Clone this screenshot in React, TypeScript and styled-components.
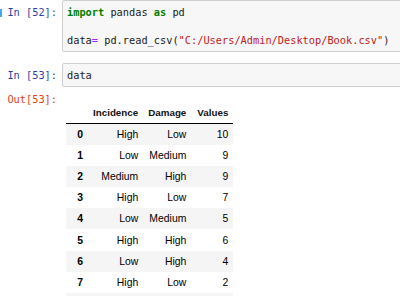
import React from "react";
import styled, { createGlobalStyle } from "styled-components";

const Global = createGlobalStyle`
  html, body { margin: 0; padding: 0; overflow: hidden; background: #fff; }
  body { width: 400px; height: 296px; }
`;

const Page = styled.div`
  position: relative;
  width: 400px;
  height: 296px;
  overflow: hidden;
  display: flex;
  flex-direction: column;
  gap: 11px;
`;

const SelectMark = styled.div`
  position: absolute;
  left: 0;
  top: 9px;
  width: 2px;
  height: 8px;
  background: #42a5f5;
`;

const CellRow = styled.div`
  display: flex;
  align-items: flex-start;
  gap: 5px;
`;

const Prompt = styled.div<{ $out?: boolean }>`
  flex: 0 0 57px;
  text-align: right;
  font-family: "DejaVu Sans Mono", monospace;
  font-size: 10.3px;
  line-height: 14px;
  color: ${(p) => (p.$out ? "#D84315" : "#303F9F")};
  padding-top: ${(p) => (p.$out ? "0" : "5px")};
  white-space: pre;
`;

const CodeBox = styled.div`
  flex: 0 0 440px;
  background: #f7f7f7;
  border: 1px solid #cfcfcf;
  border-radius: 2px;
  padding: 4px 4px;
  font-family: "DejaVu Sans Mono", monospace;
  font-size: 10.3px;
  line-height: 14px;
  color: #222;
  white-space: pre;
`;

const Kw = styled.span`
  color: #008000;
  font-weight: bold;
`;
const Op = styled.span`
  color: #aa22ff;
`;
const Str = styled.span`
  color: #ba2121;
`;

const OutRow = styled.div`
  display: flex;
  align-items: flex-start;
  gap: 5px;
  margin-top: -6px;
`;

const OutArea = styled.div`
  padding: 10px 0 0 4px;
`;

const Table = styled.table`
  border-collapse: collapse;
  table-layout: fixed;
  font-family: "Liberation Sans", Arial, sans-serif;
  font-size: 10.4px;
  color: #000;
`;

const Th = styled.th<{ $w: number }>`
  width: ${(p) => p.$w}px;
  height: 21px;
  padding: 0 5px;
  text-align: right;
  font-weight: bold;
  font-size: 9.8px;
  color: #111;
  border-bottom: 1px solid #000;
  box-sizing: border-box;
  vertical-align: middle;
`;

const Tr = styled.tr<{ $striped: boolean }>`
  background: ${(p) => (p.$striped ? "#f5f5f5" : "#fff")};
`;

const Idx = styled.th`
  height: 21.2px;
  padding: 0 5px;
  text-align: right;
  font-weight: bold;
  vertical-align: middle;
`;

const Td = styled.td`
  height: 21.2px;
  padding: 0 5px;
  text-align: right;
  vertical-align: middle;
`;

const rows: [string, string, string][] = [
  ["High", "Low", "10"],
  ["Low", "Medium", "9"],
  ["Medium", "High", "9"],
  ["High", "Low", "7"],
  ["Low", "Medium", "5"],
  ["High", "High", "6"],
  ["Low", "High", "4"],
  ["High", "Low", "2"],
];

export default function App() {
  return (
    <>
      <Global />
      <Page>
        <SelectMark />
        <CellRow>
          <Prompt>In [52]:</Prompt>
          <CodeBox>
            <Kw>import</Kw> pandas <Kw>as</Kw> pd{"\n\n"}data<Op>=</Op> pd.read_csv(
            <Str>"C:/Users/Admin/Desktop/Book.csv"</Str>)
          </CodeBox>
        </CellRow>
        <CellRow>
          <Prompt>In [53]:</Prompt>
          <CodeBox>data</CodeBox>
        </CellRow>
        <OutRow>
          <Prompt $out>Out[53]:</Prompt>
          <OutArea>
            <Table>
              <thead>
                <tr>
                  <Th $w={22}></Th>
                  <Th $w={54.7}>Incidence</Th>
                  <Th $w={48}>Damage</Th>
                  <Th $w={42}>Values</Th>
                </tr>
              </thead>
              <tbody>
                {rows.map((r, i) => (
                  <Tr key={i} $striped={i % 2 === 0}>
                    <Idx>{i}</Idx>
                    <Td>{r[0]}</Td>
                    <Td>{r[1]}</Td>
                    <Td>{r[2]}</Td>
                  </Tr>
                ))}
                <Tr $striped>
                  <Idx />
                  <Td />
                  <Td />
                  <Td />
                </Tr>
              </tbody>
            </Table>
          </OutArea>
        </OutRow>
      </Page>
    </>
  );
}
